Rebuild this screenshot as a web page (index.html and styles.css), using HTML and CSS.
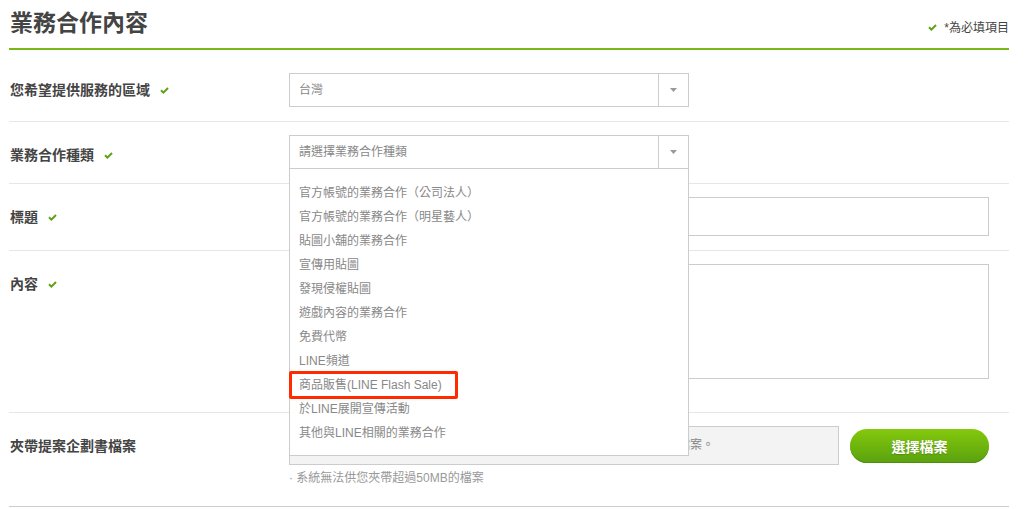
FILE: index.html
```html
<!DOCTYPE html>
<html lang="zh-Hant">
<head>
    <meta charset="UTF-8">
    <meta name="viewport" content="width=device-width, initial-scale=1.0">
    <title>業務合作內容</title>
    <link rel="stylesheet" href="styles.css">
</head>
<body>

<div class="wrap">

    <!-- 標題 -->
    <div class="head">
        <h2>業務合作內容</h2>
        <p class="required">
            <svg class="check" width="9" height="7" viewBox="0 0 9 7"><polyline points="1,3.2 3.4,5.6 8,1" fill="none" stroke="#5ea214" stroke-width="2"/></svg>
            *為必填項目
        </p>
    </div>

    <!-- 區域 -->
    <div class="row row-first">
        <div class="label">您希望提供服務的區域
            <svg class="check" width="9" height="7" viewBox="0 0 9 7"><polyline points="1,3.2 3.4,5.6 8,1" fill="none" stroke="#5ea214" stroke-width="2"/></svg>
        </div>
        <div class="field">
            <div class="select">
                <span class="select-text">台灣</span>
                <span class="select-arrow"><svg width="7" height="4" viewBox="0 0 7 4"><polygon points="0,0 7,0 3.5,4" fill="#999"/></svg></span>
            </div>
        </div>
    </div>

    <!-- 種類 -->
    <div class="row">
        <div class="label">業務合作種類
            <svg class="check" width="9" height="7" viewBox="0 0 9 7"><polyline points="1,3.2 3.4,5.6 8,1" fill="none" stroke="#5ea214" stroke-width="2"/></svg>
        </div>
        <div class="field">
            <div class="select select-open">
                <span class="select-text">請選擇業務合作種類</span>
                <span class="select-arrow"><svg width="7" height="4" viewBox="0 0 7 4"><polygon points="0,0 7,0 3.5,4" fill="#999"/></svg></span>
                <ul class="options">
                    <li>官方帳號的業務合作（公司法人）</li>
                    <li>官方帳號的業務合作（明星藝人）</li>
                    <li>貼圖小舖的業務合作</li>
                    <li>宣傳用貼圖</li>
                    <li>發現侵權貼圖</li>
                    <li>遊戲內容的業務合作</li>
                    <li>免費代幣</li>
                    <li>LINE頻道</li>
                    <li class="marked">商品販售(LINE Flash Sale)</li>
                    <li>於LINE展開宣傳活動</li>
                    <li>其他與LINE相關的業務合作</li>
                </ul>
            </div>
        </div>
    </div>

    <!-- 標題 -->
    <div class="row">
        <div class="label">標題
            <svg class="check" width="9" height="7" viewBox="0 0 9 7"><polyline points="1,3.2 3.4,5.6 8,1" fill="none" stroke="#5ea214" stroke-width="2"/></svg>
        </div>
        <div class="field">
            <div class="input"></div>
        </div>
    </div>

    <!-- 內容 -->
    <div class="row row-text">
        <div class="label">內容
            <svg class="check" width="9" height="7" viewBox="0 0 9 7"><polyline points="1,3.2 3.4,5.6 8,1" fill="none" stroke="#5ea214" stroke-width="2"/></svg>
        </div>
        <div class="field">
            <div class="textarea"></div>
        </div>
    </div>

    <!-- 檔案 -->
    <div class="row row-last">
        <div class="label">夾帶提案企劃書檔案</div>
        <div class="field">
            <div class="file-line">
                <div class="file-box">您可以夾帶 PDF、Word、PowerPoint、Excel 或 ZIP 格式的提案企劃書檔案。</div>
                <button class="file-button">選擇檔案</button>
            </div>
            <p class="note">· 系統無法供您夾帶超過50MB的檔案</p>
        </div>
    </div>

</div>

</body>
</html>
```

FILE: styles.css
```css
body {
    margin: 0;
    font-family: "Liberation Sans", "Noto Sans CJK TC", sans-serif;
    color: #444;
    background: #fff;
}

.wrap {
    width: 1000px;
    margin: 0 9px;
}

/* 標題列 */
.head {
    display: flex;
    justify-content: space-between;
    height: 48px;
    border-bottom: 2px solid #7ab819;
}

.head h2 {
    margin: 0;
    padding-top: 7px;
    padding-left: 1px;
    font-size: 23px;
    line-height: 32px;
    font-weight: bold;
    color: #444;
}

.required {
    margin: 0;
    padding-top: 20px;
    font-size: 12px;
    line-height: 16px;
    color: #444;
}

.required .check {
    margin-right: 4px;
}

.check {
    vertical-align: middle;
    position: relative;
    top: -1px;
}

/* 表單列 */
.row {
    display: flex;
    padding: 13px 0 14px;
    border-bottom: 1px solid #e6e6e6;
}

.row-first {
    padding-top: 23px;
}

.row-text {
    padding-bottom: 33px;
}

.row-last {
    padding-bottom: 19px;
    border-bottom-color: #ccc;
}

.label {
    width: 280px;
    box-sizing: border-box;
    padding-top: 10px;
    padding-left: 1px;
    font-size: 14px;
    line-height: 20px;
    font-weight: bold;
    color: #444;
}

.row-first .label {
    padding-top: 7px;
}

.label .check {
    margin-left: 6px;
}

.field {
    width: 720px;
}

/* 下拉選單 */
.select {
    position: relative;
    display: flex;
    width: 400px;
    height: 34px;
    box-sizing: border-box;
    border: 1px solid #ccc;
    background: #fff;
}

.select-text {
    flex: 1;
    padding-left: 9px;
    font-size: 12px;
    line-height: 32px;
    color: #888;
}

.select-arrow {
    display: flex;
    align-items: center;
    justify-content: center;
    width: 29px;
    border-left: 1px solid #ccc;
}

.options {
    position: absolute;
    z-index: 5;
    top: 32px;
    left: -1px;
    width: 400px;
    box-sizing: border-box;
    margin: 0;
    padding: 12px 0 10px;
    list-style: none;
    border: 1px solid #ccc;
    background: #fff;
}

.options li {
    position: relative;
    padding-left: 9px;
    font-size: 12px;
    line-height: 24px;
    color: #888;
}

/* 紅框標示 */
.marked::after {
    content: "";
    position: absolute;
    top: -2px;
    left: -1px;
    width: 169px;
    height: 28px;
    box-sizing: border-box;
    border: 3px solid #ff2a00;
    border-radius: 2px;
}

/* 輸入欄位 */
.input {
    width: 700px;
    height: 39px;
    box-sizing: border-box;
    border: 1px solid #ccc;
}

.textarea {
    width: 700px;
    height: 115px;
    box-sizing: border-box;
    border: 1px solid #ccc;
}

.file-line {
    display: flex;
    align-items: center;
    gap: 11px;
}

.file-box {
    width: 550px;
    height: 39px;
    box-sizing: border-box;
    padding-left: 9px;
    border: 1px solid #ccc;
    background: #f3f3f3;
    font-size: 12px;
    line-height: 37px;
    color: #888;
    white-space: nowrap;
    overflow: hidden;
}

.file-button {
    width: 139px;
    height: 34px;
    border: none;
    border-radius: 17px;
    background: linear-gradient(#84c90c, #5aa10f);
    box-shadow: inset 0 -1px 0 #4f8f0e;
    font-family: "Liberation Sans", "Noto Sans CJK TC", sans-serif;
    font-size: 14px;
    font-weight: bold;
    color: #fff;
    text-shadow: 0 1px 1px rgba(0, 0, 0, 0.2);
    cursor: pointer;
}

.note {
    margin: 4px 0 0;
    font-size: 12px;
    line-height: 18px;
    color: #999;
}
```
